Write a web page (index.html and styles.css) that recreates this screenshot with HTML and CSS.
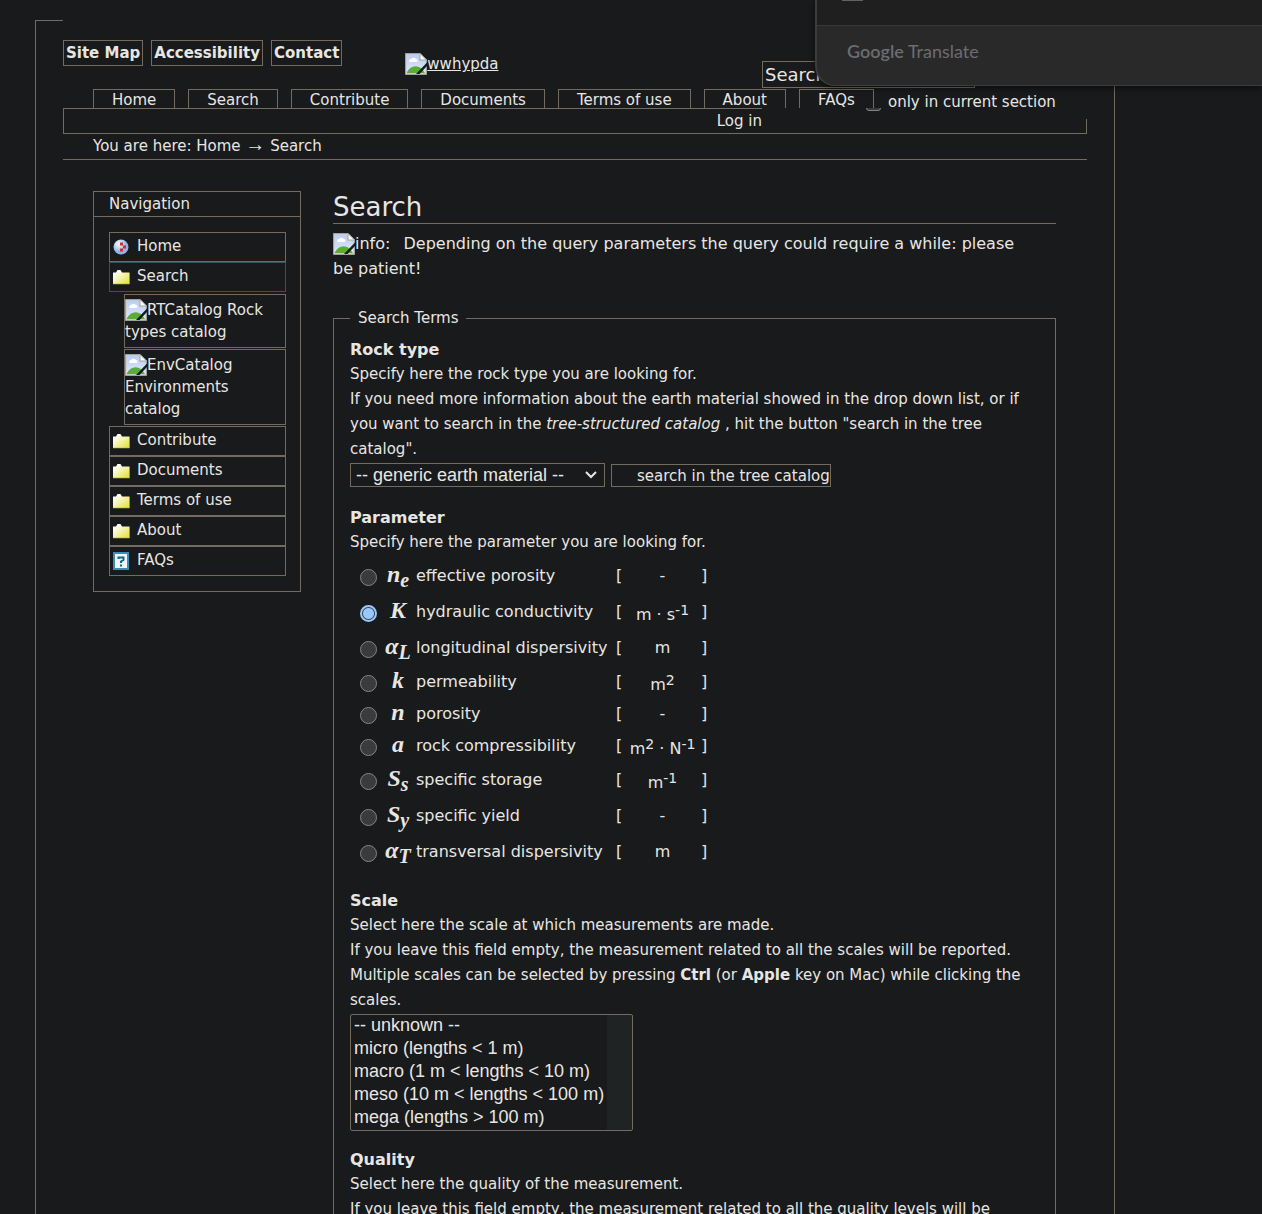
FILE: index.html
```html
<!DOCTYPE html>
<html lang="en">
<head>
<meta charset="utf-8">
<title>Search — wwhypda</title>
<link rel="stylesheet" href="styles.css">
</head>
<body>
<svg class="defs" aria-hidden="true">
  <defs>
    <linearGradient id="sky" x1="0" y1="0" x2="0" y2="1"><stop offset="0" stop-color="#b9cdf3"/><stop offset="1" stop-color="#dfe8fb"/></linearGradient>
    <linearGradient id="paper" x1="0" y1="0" x2="1" y2="1"><stop offset=".2" stop-color="#fffff4"/><stop offset="1" stop-color="#e2e02c"/></linearGradient>
    <radialGradient id="ball" cx=".35" cy=".3"><stop offset="0" stop-color="#ffffff"/><stop offset="1" stop-color="#8fb3e6"/></radialGradient>
    <symbol id="broken" viewBox="0 0 22 22">
      <path d="M.5.5H15l6.500 6.500V21.500H.5Z" fill="#c8c8c8" stroke="#a0a0a0"/>
      <path d="M1.500 1.500H14V8H20.500V20H1.500Z" fill="url(#sky)"/>
      <path d="M4 8a2 2 0 0 1 2-2 3 3 0 0 1 5 0 1.500 1.500 0 0 1 0 3H5a1 1 0 0 1-1-1Z" fill="#fff"/>
      <path d="M2 20v-1C5 13 12 11 17 16l3 4Z" fill="#5aac34"/>
      <path d="M15 .5V7h6.500Z" fill="#fff" stroke="#a9a9a9"/>
      <path d="M22 9.500V13l-7.500 8H11Z" fill="#181a1b"/>
    </symbol>
    <symbol id="folder" viewBox="0 0 18 18">
      <path d="M1 4.500h3L5.500 2h3L10 4.500h7.500V16H1Z" fill="url(#paper)"/>
      <path d="M1 16h16.500V5" fill="none" stroke="#a9a83a" stroke-opacity=".6"/>
    </symbol>
    <symbol id="house" viewBox="0 0 18 18">
      <circle cx="9" cy="9" r="7.500" fill="url(#ball)"/>
      <path d="M8 4.500h3v3H8ZM11 7.500h3v3h-3ZM8 10.500h3v3H8Z" fill="#d22d2d"/>
    </symbol>
    <symbol id="faq" viewBox="0 0 18 18">
      <rect x="2" y="1" width="14" height="16" fill="#f1f6f9" stroke="#3c8db4" stroke-width="2"/>
      <path d="M6.500 7V5.500h5V8L9 9.500V11" fill="none" stroke="#1d5f86" stroke-width="2"/>
      <path d="M8 12.500h2v2H8Z" fill="#1d5f86"/>
    </symbol>
  </defs>
</svg>

<div class="portal">
  <header class="header">
    <div class="header-top">
      <ul class="actions">
        <li><a href="#sitemap">Site Map</a></li>
        <li><a href="#accessibility">Accessibility</a></li>
        <li><a href="#contact">Contact</a></li>
      </ul>
      <a class="logo" href="#home"><svg class="broken"><use href="#broken"/></svg>wwhypda</a>
    </div>
    <form class="search">
      <input class="search-box" type="text" value="Search Site" aria-label="Search Site">
      <div class="search-scope">
        <input class="check" type="checkbox" id="current">
        <label for="current">only in current section</label>
      </div>
    </form>
    <nav class="tabs-row">
      <ul class="tabs">
        <li><a href="#home">Home</a></li>
        <li><a href="#search">Search</a></li>
        <li><a href="#contribute">Contribute</a></li>
        <li><a href="#documents">Documents</a></li>
        <li><a href="#terms">Terms of use</a></li>
        <li><a href="#about">About</a></li>
        <li><a href="#faqs">FAQs</a></li>
      </ul>
    </nav>
    <div class="personal"><a href="#login">Log in</a></div>
  </header>
  <div class="crumbs">You are here: <a href="#home">Home</a> <span class="arrow">→</span> <span>Search</span></div>

  <div class="columns">
    <aside class="portlet">
      <h2 class="portlet-title">Navigation</h2>
      <ul class="nav">
        <li><a class="nav-item" href="#home"><svg class="ico"><use href="#house"/></svg>Home</a></li>
        <li><a class="nav-item current" href="#search"><svg class="ico"><use href="#folder"/></svg>Search</a>
          <ul class="subnav">
            <li><a href="#rt"><svg class="broken"><use href="#broken"/></svg>RTCatalog Rock types catalog</a></li>
            <li><a href="#env"><svg class="broken"><use href="#broken"/></svg>EnvCatalog Environments catalog</a></li>
          </ul>
        </li>
        <li><a class="nav-item" href="#contribute"><svg class="ico"><use href="#folder"/></svg>Contribute</a></li>
        <li><a class="nav-item" href="#documents"><svg class="ico"><use href="#folder"/></svg>Documents</a></li>
        <li><a class="nav-item" href="#terms"><svg class="ico"><use href="#folder"/></svg>Terms of use</a></li>
        <li><a class="nav-item" href="#about"><svg class="ico"><use href="#folder"/></svg>About</a></li>
        <li><a class="nav-item" href="#faqs"><svg class="ico"><use href="#faq"/></svg>FAQs</a></li>
      </ul>
    </aside>

    <main class="content">
      <h1>Search</h1>
      <p class="info"><span class="alt"><svg class="broken"><use href="#broken"/></svg>info:</span> Depending on the query parameters the query could require a while: please be patient!</p>
      <form>
        <fieldset class="terms">
          <legend>Search Terms</legend>

          <section class="field">
            <h3><label for="rock">Rock type</label></h3>
            <p>Specify here the rock type you are looking for.<br>If you need more information about the earth material showed in the drop down list, or if you want to search in the <em>tree-structured catalog</em> , hit the button "search in the tree catalog".</p>
            <div class="controls">
              <div class="drop">
                <select id="rock"><option>-- generic earth material --</option></select>
                <svg class="chevron" viewBox="0 0 12 8"><path d="M1 1l5 5 5-5" fill="none" stroke="#e8e6e3" stroke-width="2"/></svg>
              </div>
              <button class="tree" type="button">search in the tree catalog</button>
            </div>
          </section>

          <section class="field">
            <h3>Parameter</h3>
            <p>Specify here the parameter you are looking for.</p>
            <table class="params">
              <tr><td><input type="radio" name="p" id="p1"></td><td class="sym">n<sub>e</sub></td><td><label for="p1">effective porosity</label></td><td>[</td><td class="unit">-</td><td>]</td></tr>
              <tr><td><input type="radio" name="p" id="p2" checked></td><td class="sym">K</td><td><label for="p2">hydraulic conductivity</label></td><td>[</td><td class="unit">m · s<sup>-1</sup></td><td>]</td></tr>
              <tr><td><input type="radio" name="p" id="p3"></td><td class="sym">α<sub>L</sub></td><td><label for="p3">longitudinal dispersivity</label></td><td>[</td><td class="unit">m</td><td>]</td></tr>
              <tr class="short"><td><input type="radio" name="p" id="p4"></td><td class="sym">k</td><td><label for="p4">permeability</label></td><td>[</td><td class="unit">m<sup>2</sup></td><td>]</td></tr>
              <tr class="short"><td><input type="radio" name="p" id="p5"></td><td class="sym">n</td><td><label for="p5">porosity</label></td><td>[</td><td class="unit">-</td><td>]</td></tr>
              <tr class="short"><td><input type="radio" name="p" id="p6"></td><td class="sym">a</td><td><label for="p6">rock compressibility</label></td><td>[</td><td class="unit">m<sup>2</sup> · N<sup>-1</sup></td><td>]</td></tr>
              <tr><td><input type="radio" name="p" id="p7"></td><td class="sym">S<sub>s</sub></td><td><label for="p7">specific storage</label></td><td>[</td><td class="unit">m<sup>-1</sup></td><td>]</td></tr>
              <tr><td><input type="radio" name="p" id="p8"></td><td class="sym">S<sub>y</sub></td><td><label for="p8">specific yield</label></td><td>[</td><td class="unit">-</td><td>]</td></tr>
              <tr><td><input type="radio" name="p" id="p9"></td><td class="sym">α<sub>T</sub></td><td><label for="p9">transversal dispersivity</label></td><td>[</td><td class="unit">m</td><td>]</td></tr>
            </table>
          </section>

          <section class="field">
            <h3><label for="scale">Scale</label></h3>
            <p>Select here the scale at which measurements are made.<br>If you leave this field empty, the measurement related to all the scales will be reported.<br>Multiple scales can be selected by pressing <strong>Ctrl</strong> (or <strong>Apple</strong> key on Mac) while clicking the scales.</p>
            <select class="list" id="scale" multiple size="5">
              <option>-- unknown --</option>
              <option>micro (lengths &lt; 1 m)</option>
              <option>macro (1 m &lt; lengths &lt; 10 m)</option>
              <option>meso (10 m &lt; lengths &lt; 100 m)</option>
              <option>mega (lengths &gt; 100 m)</option>
            </select>
          </section>

          <section class="field">
            <h3>Quality</h3>
            <p>Select here the quality of the measurement.<br>If you leave this field empty, the measurement related to all the quality levels will be</p>
          </section>
        </fieldset>
      </form>
    </main>
  </div>
</div>

<div class="translate">
  <div class="translate-top"><span class="translate-mark"></span></div>
  <div class="translate-brand"><b>Google</b> Translate</div>
</div>
</body>
</html>
```
FILE: styles.css
```css
:root {
  --bg: #181a1b;
  --line: #736b5e;
  --text: #e8e6e3;
}

* { box-sizing: border-box; }

body {
  margin: 0;
  height: 100vh;
  overflow: hidden;
  background: var(--bg);
  color: var(--text);
  font: 15px/25px "DejaVu Sans", Verdana, sans-serif;
}

a { color: inherit; text-decoration: none; }
ul { list-style: none; margin: 0; padding: 0; }
h1, h2, h3, p { margin: 0; font-weight: normal; }
.defs { position: absolute; width: 0; height: 0; }
.broken { width: 22px; height: 22px; vertical-align: -6px; }

.portal {
  margin: 20px 147px 0 35px;
  border: 1px solid var(--line);
  border-bottom: 0;
}

/* Header */
.header {
  display: grid;
  grid-template-columns: 1fr 325px;
  grid-template-rows: 69px 19px 26px;
  margin: -1px 27px 0;
  background: var(--bg);
}
.header-top {
  grid-area: 1 / 1;
  display: flex;
  align-items: flex-start;
  padding-top: 20px;
}
.actions { display: flex; gap: 8px; font-weight: bold; }
.actions a {
  display: block;
  padding: 0 2px;
  border: 1px solid var(--line);
  line-height: 24px;
}
.logo { margin: 12px 0 0 63px; text-decoration: underline; }
.search {
  grid-area: 1 / 2 / 4 / 3;
  align-self: start;
  z-index: 1;
  padding: 41px 0 4px;
  background: var(--bg);
}
.search-box {
  display: block;
  width: 213px;
  height: 27px;
  padding: 0 2px;
  border: 1px solid var(--line);
  background: var(--bg);
  color: var(--text);
  font: 18px "DejaVu Sans", Verdana, sans-serif;
}
.search-scope {
  display: flex;
  align-items: center;
  gap: 7px;
  padding: 2px 0 0 104px;
}
.check {
  appearance: none;
  width: 15px;
  height: 16px;
  margin: 0;
  border: 1px solid #858585;
  border-radius: 3px;
  background: #3b3b3b;
}
.tabs-row { grid-area: 2 / 1 / 3 / 3; z-index: 2; padding-left: 30px; }
.tabs { display: flex; gap: 5px; }
.tabs li { padding-right: 8px; background: var(--bg); }
.tabs a {
  display: block;
  height: 19px;
  padding: 0 18px;
  border: 1px solid var(--line);
  border-bottom: 0;
  line-height: 20px;
}
.personal {
  grid-area: 3 / 1 / 4 / 3;
  padding-right: 324px;
  border: 1px solid var(--line);
  line-height: 24px;
  text-align: right;
}
.personal a { position: relative; z-index: 2; }
.crumbs {
  margin: 0 27px;
  padding-left: 30px;
  border-bottom: 1px solid var(--line);
}
.arrow { font: 20px/20px "Liberation Sans", Arial, sans-serif; }

/* Columns */
.columns {
  display: grid;
  grid-template-columns: 208px 1fr;
  align-items: start;
  gap: 32px;
  padding: 31px 58px 0 57px;
}

.portlet { border: 1px solid var(--line); }
.portlet-title {
  padding-left: 15px;
  border-bottom: 1px solid var(--line);
  font-size: 15px;
  line-height: 24px;
}
.nav { padding: 15px 14px 15px 15px; }
.nav-item {
  display: flex;
  align-items: center;
  gap: 7px;
  height: 30px;
  padding: 0 0 2px 2px;
  border: 1px solid var(--line);
}
.nav-item.current { border-color: #34535f; }
.ico { width: 18px; height: 18px; margin-top: 1px; }
.subnav {
  display: grid;
  gap: 1px;
  padding: 2px 0 1px 15px;
  line-height: 22px;
}
.subnav a {
  display: block;
  padding: 4px 0;
  border: 1px solid var(--line);
}

h1 {
  border-bottom: 1px solid var(--line);
  font-size: 26px;
  line-height: 32px;
}
.info { padding: 7px 24px 0 0; font-size: 16px; }
.alt { margin-right: 8px; }

.terms {
  margin: 25px 0 0;
  padding: 6px 16px 40px;
  border: 1px solid var(--line);
}
.terms legend { padding: 0 8px; }
.field { margin-bottom: 16px; }
h3 { font-size: 16px; font-weight: bold; }

.controls { display: flex; align-items: flex-end; gap: 6px; padding: 1px 0 2px; }
.drop { display: grid; width: 255px; }
.drop select, .chevron { grid-area: 1 / 1; }
.drop select {
  appearance: none;
  height: 24px;
  padding: 0 5px;
  border: 1px solid var(--line);
  background: var(--bg);
  color: var(--text);
  font: 18px "Liberation Sans", Arial, sans-serif;
}
.chevron {
  place-self: center end;
  width: 12px;
  height: 8px;
  margin-right: 8px;
  pointer-events: none;
}
.tree {
  height: 23px;
  padding: 0 0 0 25px;
  border: 1px solid var(--line);
  background: var(--bg);
  color: var(--text);
  font: 15px "DejaVu Sans", Verdana, sans-serif;
}

.params {
  margin: 3px 0 18px 8px;
  border-collapse: collapse;
  font-size: 16px;
  line-height: 20px;
}
.params tr { height: 36px; }
.params .short { height: 32px; }
.params td { padding: 0; }
.params td:nth-child(1) { width: 22px; }
.params td:nth-child(3) { width: 200px; }
.params td:nth-child(4) { width: 8px; }
.params sup { font-size: 14px; line-height: 20px; vertical-align: 5px; }
.params .sym {
  width: 36px;
  padding-bottom: 4px;
  text-align: center;
  font: italic bold 24px/24px "Liberation Serif", "Times New Roman", serif;
}
.params sub { font-size: 20px; line-height: 0; vertical-align: -5px; }
.params .unit { width: 77px; text-align: center; }
.params input {
  appearance: none;
  display: block;
  width: 17px;
  height: 17px;
  margin: 2px 2px 0;
  border: 1px solid #858585;
  border-radius: 50%;
  background: #3b3b3b;
}
.params input:checked {
  border: 2px solid #99c8ff;
  background: radial-gradient(circle, #99c8ff 5px, #3b3b3b 6px);
}

.list {
  display: block;
  width: 283px;
  height: 117px;
  margin-top: 1px;
  padding: 0;
  overflow: hidden;
  border: 1px solid var(--line);
  border-radius: 2px;
  background: linear-gradient(#202324, #202324) right / 25px 100% no-repeat var(--bg);
  color: var(--text);
  font: 18px "Liberation Sans", Arial, sans-serif;
}
.list option { height: 23px; padding: 0 3px; line-height: 20px; }

/* Browser pop-up */
.translate {
  position: absolute;
  z-index: 3;
  top: 0;
  right: 0;
  left: 815px;
  overflow: hidden;
  border: 1px solid #3a3c3d;
  border-width: 0 0 1px 2px;
  border-radius: 0 0 0 20px;
  background: #292929;
  box-shadow: 0 2px 6px #0008;
}
.translate-top {
  height: 26px;
  padding-left: 25px;
  border-bottom: 1px solid #383838;
  background: #1f1f1f;
}
.translate-mark { display: block; width: 21px; height: 1px; background: #5f6368; }
.translate-brand {
  padding: 0 0 9px 30px;
  color: #6a6d72;
  font: 18px/50px Lato, sans-serif;
}
.translate-brand b { font-weight: 600; }
```
